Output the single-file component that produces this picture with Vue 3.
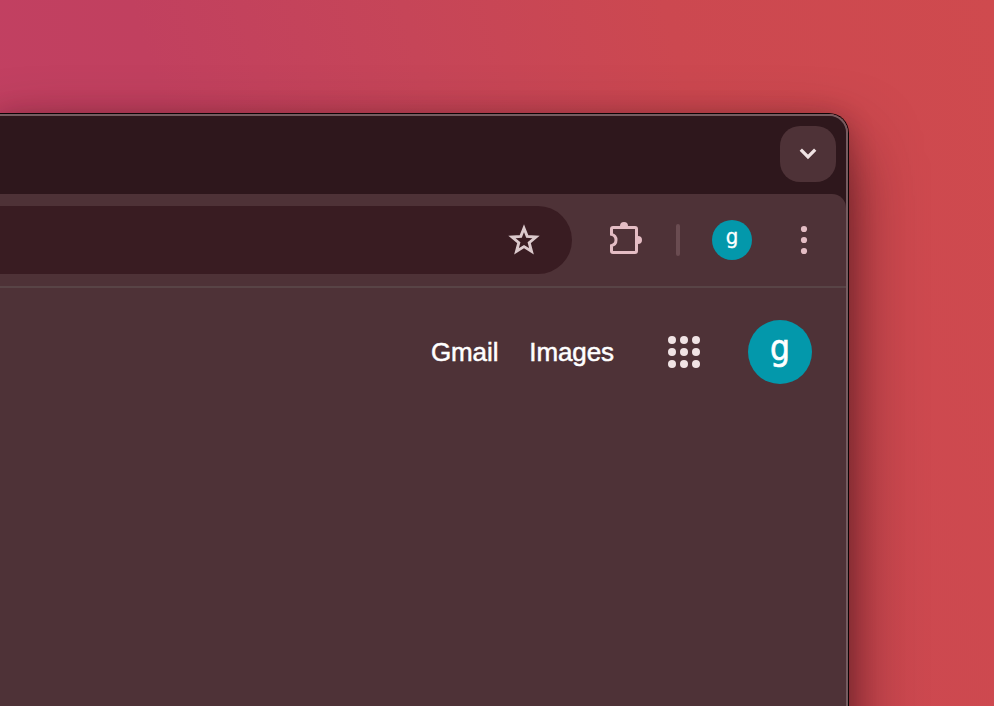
<script setup>
const dots = [4, 16, 28]
const cells = dots.flatMap((y) => dots.map((x) => ({ x, y })))
</script>

<template>
  <main class="desktop">
    <section class="window">
      <div class="frame">
        <header class="tabstrip">
          <button class="tab-search" aria-label="Search tabs">
            <svg width="20" height="14" viewBox="0 0 20 14"><path d="M2.800 2.700 10 9.900 17.200 2.700" fill="none" stroke="#f0e3e4" stroke-width="3.300" /></svg>
          </button>
        </header>
        <div class="toolbar-wrap">
          <div class="toolbar">
            <div class="omnibox">
              <svg width="32" height="32" viewBox="0 0 32 32"><path d="M16 4.2 19.2 12.4 28 13 21.2 18.7 23.5 27.3 16 22.6 8.5 27.3 10.8 18.7 4 13 12.8 12.4Z" fill="none" stroke="#dbc9cc" stroke-width="2.9" /></svg>
            </div>
            <svg class="puzzle" width="34" height="34" viewBox="0 0 34 34">
              <path d="M4 6.500H26a1.500 1.500 0 0 1 1.500 1.500V30a1.500 1.500 0 0 1-1.500 1.500H4A1.500 1.500 0 0 1 2.500 30V24.600C8.500 23 8.500 15 2.500 13.400V8A1.500 1.500 0 0 1 4 6.500Z" fill="none" stroke="#e4bdc4" stroke-width="3" />
              <path d="M11 6V5a4 4 0 0 1 8 0V6ZM28 15h1a4 4 0 0 1 0 8h-1Z" fill="#e4bdc4" />
            </svg>
            <span class="divider"></span>
            <span class="avatar small">g</span>
            <svg class="menu" width="8" height="30" viewBox="0 0 8 30" fill="#e4bdc4">
              <circle v-for="y in [4, 15, 26]" :key="y" cx="4" :cy="y" r="3.1" />
            </svg>
          </div>
        </div>
        <div class="page">
          <nav class="links">
            <a>Gmail</a>
            <a>Images</a>
            <svg class="apps" width="32" height="32" viewBox="0 0 32 32" fill="#f0e3e4">
              <circle v-for="c in cells" :key="`${c.x}-${c.y}`" :cx="c.x" :cy="c.y" r="4" />
            </svg>
            <span class="avatar">g</span>
          </nav>
        </div>
      </div>
    </section>
  </main>
</template>

<style>
body { overflow: hidden; }
</style>

<style scoped>
* { box-sizing: border-box; }
.desktop {
  width: 994px;
  height: 706px;
  padding-top: 113px;
  overflow: hidden;
  background: linear-gradient(75deg, #c24064 0%, #c1405f 27%, #c64558 50%, #cc4850 72%, #cf4a4e 100%);
  font-family: "Liberation Sans", Arial, sans-serif;
}
.window {
  width: 849px;
  height: 720px;
  border: solid #0c0406;
  border-width: 1px 1px 0 0;
  border-radius: 0 20px 0 0;
  box-shadow: 0 34px 68px rgba(60, 16, 22, .7), 0 4px 26px rgba(60, 16, 22, .32);
}
.frame {
  height: 100%;
  border: solid #755c60;
  border-width: 2px 2px 0 0;
  border-radius: 0 19px 0 0;
  overflow: hidden;
  background: #4e3237;
}
.tabstrip {
  display: flex;
  justify-content: flex-end;
  height: 78px;
  padding: 10px 10px 0 0;
  background: #2e171c;
}
.tab-search {
  display: flex;
  align-items: center;
  justify-content: center;
  width: 56px;
  height: 56px;
  padding: 0;
  border: 0;
  border-radius: 20px;
  background: #4e3237;
}
.toolbar-wrap { background: #2e171c; }
.toolbar {
  display: flex;
  align-items: center;
  height: 94px;
  border-bottom: 2px solid #584446;
  border-radius: 0 14px 0 0;
  background: #4e3237;
}
.omnibox {
  display: flex;
  align-items: center;
  justify-content: flex-end;
  width: 572px;
  height: 68px;
  padding-right: 32px;
  border-radius: 0 34px 34px 0;
  background: #391c22;
}
.puzzle { margin: -4px 0 0 37px; }
.divider {
  width: 4px;
  height: 32px;
  margin: 0 32px 0 33px;
  border-radius: 2px;
  background: #6a4c51;
}
.avatar {
  display: flex;
  align-items: center;
  justify-content: center;
  width: 64px;
  height: 64px;
  padding-bottom: 7px;
  border-radius: 50%;
  background: #0398ab;
  color: #fff;
  font: 35px/1 "DejaVu Sans Condensed", "DejaVu Sans", sans-serif;
  font-stretch: condensed;
  -webkit-text-stroke: .6px #fff;
}
.small {
  width: 40px;
  height: 40px;
  padding-bottom: 6px;
  font-size: 22px;
  -webkit-text-stroke-width: .3px;
}
.menu { margin-left: 48px; }
.page { padding: 32px 34px 0 0; }
.links {
  display: flex;
  align-items: center;
  justify-content: flex-end;
  color: #fff;
  font-size: 26px;
}
.links a {
  letter-spacing: -.1px;
  -webkit-text-stroke: .5px #fff;
}
.links a + a { margin-left: 31px; }
.apps { margin: 0 48px 0 54px; }
</style>
